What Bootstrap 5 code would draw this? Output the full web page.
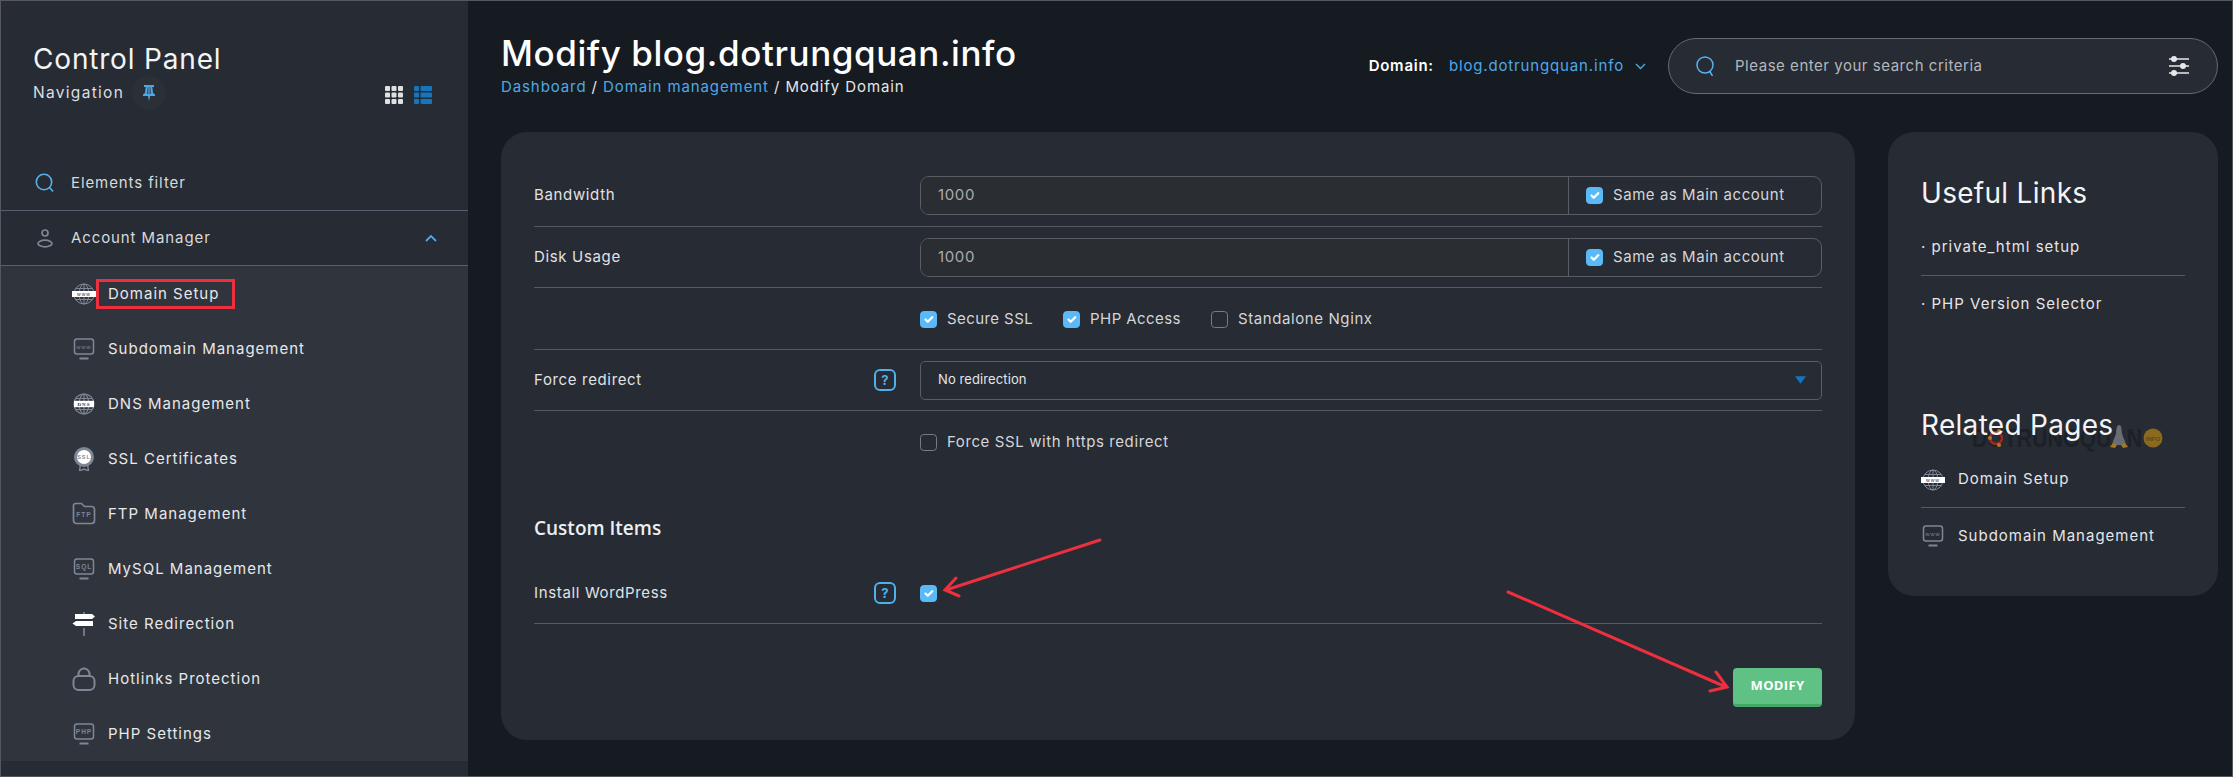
<!doctype html>
<html lang="en"><head><meta charset="utf-8"><title>Modify Domain</title>
<link href="https://cdn.jsdelivr.net/npm/bootstrap@5.3.0/dist/css/bootstrap.min.css" rel="stylesheet">
<style>
html,body{height:777px;overflow:hidden;margin:0}
body{background:#161a21;font-family:Inter,"Liberation Sans",sans-serif;color:#e4e6e9;position:relative}
.shell{width:2233px;height:777px;border:1px solid #55585e}
.sidebar{width:467px;height:100%;background:#272b33;flex:none}
.side-head{height:155px;padding:35px 0 0 32px;position:relative}
.cp-title{font-size:28px;line-height:46px;letter-spacing:.82px;color:#f3f4f5}
.cp-nav{font-size:15.5px;line-height:24px;letter-spacing:1.3px;color:#dcdee1;margin-top:-6px}
.pin-glow{width:34px;height:34px;border-radius:50%;background:#2b2f37;margin-left:8px}
.view-toggle{position:absolute;left:384px;top:85px;gap:11px}
.side-row{height:55px;border-bottom:1px solid #56606e;font-size:15px;letter-spacing:.9px;color:#d7d9dc;padding-left:34px}
.side-row svg.ico{margin-right:16px}
.chev{margin-right:31px}
.sub-menu{background:#30343c}
.sub-item{height:55px;padding-left:71px;font-size:15px;letter-spacing:1px;color:#e7e8ea}
.sub-item span{position:relative;top:1px}
.sub-item svg{margin-right:12px;width:24px;height:24px;flex:none}
.marked{border:3px solid #ee2f3e;margin-left:-12px;padding:2px 13px 2px 9px;margin-top:-2px;line-height:20px}
.content{padding:30px 14px 0 33px;flex:1;min-width:0}
.page-head{height:101px}
.page-title{font-size:35px;line-height:44px;font-weight:500;letter-spacing:.57px;color:#fff;margin:0}
.crumbs{font-size:15px;line-height:20px;letter-spacing:.9px;color:#e4e6e9;margin-top:2px}
.crumbs a,.domain-val{color:#4fa8e6;text-decoration:none}
.top-tools{margin-top:7px}
.domain-lbl{font-size:15px;font-weight:600;color:#fff;letter-spacing:.75px;margin-right:15px}
.domain-val{font-size:15px;letter-spacing:.85px;margin-right:11px}
.searchbar{width:550px;height:56px;border:1.5px solid #676a70;border-radius:28px;background:#272b33;margin-left:22px;padding:0 27px;font-size:15px;letter-spacing:.53px;color:#b4b7bc}
.panel-main{width:1354px;height:608px;background:#272b33;border-radius:26px;padding:44px 33px 0;flex:none}
.panel-side{width:330px;height:464px;background:#272b33;border-radius:26px;padding:44px 33px 0;margin-left:33px;flex:none;position:relative}
.form-line{border-bottom:1px solid #565960;font-size:15px;letter-spacing:.65px;color:#e0e2e5}
.row-first{padding-bottom:11px}
.row-second{padding:11px 0 10px}
.row-check{height:62px;padding-top:1px}
.row-plain{height:61px}
.row-free{height:63px;border-bottom:0}
.offset-cell{width:386px;flex:none}
.lbl-cell{width:340px;flex:none}
.help-cell{width:46px;flex:none}
.help-btn{width:22px;height:22px;border:2px solid #4fb0ee;border-radius:6px;color:#4fb0ee;font-size:13px;font-weight:700;line-height:18px;text-align:center;letter-spacing:0}
.combo{flex:1;height:39px;border:1px solid #5a5d64;border-radius:9px;overflow:hidden}
.combo-num{flex:1;background:#2a2d32;padding-left:17px;color:#a9acb1;border-right:1px solid #5a5d64}
.combo-chk{width:252px;padding-left:17px;color:#d4d6da;letter-spacing:.55px}
.tick{width:17px;height:17px;flex:none;margin:0 10px 0 0;background-color:transparent;border:1px solid #777b84;border-radius:4px}
.tick:checked{background-color:#5ab9f7;border-color:#5ab9f7}
.tick-lbl{color:#d4d6da;letter-spacing:.42px;margin-right:30px}
.tick-wide{color:#d4d6da;letter-spacing:.6px}
.sel{flex:1;height:39px;border:1px solid #5a5d64;border-radius:5px;background-color:transparent;color:#e4e6e9;font-size:13px;padding-left:17px;background-image:url("data:image/svg+xml,%3csvg xmlns='http://www.w3.org/2000/svg' viewBox='0 0 12 8'%3e%3cpath fill='%231576bd' d='M0 0h12L6 8z'/%3e%3c/svg%3e");background-size:11px 8px;background-position:right 15px center;letter-spacing:.1px}
.sec-title{font-family:"Open Sans",sans-serif;font-weight:600;font-size:19px;line-height:26px;color:#eceef0;padding-top:41px;height:89px}
.modify-btn{background:#5fc183;border:0;border-bottom:3px solid #46a866;border-radius:4px;width:89px;height:39px;color:#fff;font-family:"Open Sans",sans-serif;font-weight:700;font-size:13px;letter-spacing:.35px;padding:0;margin-top:44px}
.side-title{font-size:28px;line-height:34px;letter-spacing:.3px;color:#f3f4f5;position:relative;z-index:2}
.second-title{margin-top:76px}
.link-list{margin-top:10px}
.link-item{height:56px;font-size:15px;letter-spacing:1px;color:#e4e6e9;border-bottom:1px solid #565960;position:relative;z-index:2}
.link-item svg{width:24px;height:24px;margin-right:13px;flex:none}
.wm{position:absolute;left:84px;top:290px;width:200px;height:36px}
.notes{position:absolute;left:0;top:0;pointer-events:none;z-index:5}
</style></head>
<body>
<svg width="0" height="0" class="d-block position-absolute">
<defs>
<symbol id="i-globe" viewBox="0 0 24 24"><g fill="none" stroke="#7f8696" stroke-width="1"><circle cx="12" cy="12" r="10"/><ellipse cx="12" cy="12" rx="4.8" ry="10"/><path d="M12 2v20M3.5 6.5h17M3.5 17.5h17"/></g><rect x="0" y="9" width="24" height="6" fill="#fff"/><text x="12" y="14" font-size="5" text-anchor="middle" fill="#30343c" font-family="Liberation Sans">www</text></symbol>
<symbol id="i-dns" viewBox="0 0 24 24"><g fill="none" stroke="#7f8696" stroke-width="1.2"><circle cx="12" cy="12" r="10"/><ellipse cx="12" cy="12" rx="4.8" ry="10"/><path d="M12 2v20M3.5 6.5h17M3.5 17.5h17"/></g><rect x="2" y="8.8" width="20" height="6.4" fill="#fff"/><text x="12" y="14" font-size="5" font-weight="700" text-anchor="middle" fill="#30343c" font-family="Liberation Serif">DNS</text></symbol>
<symbol id="i-www" viewBox="0 0 24 24"><rect x="2.5" y="2" width="19" height="15" rx="2.5" fill="none" stroke="#7f8696" stroke-width="1.5"/><path d="M7.500 21.500h9" stroke="#7f8696" stroke-width="2"/><text x="12" y="11.500" font-size="5.500" text-anchor="middle" fill="#7f8696" font-family="Liberation Sans">www</text></symbol>
<symbol id="i-sql" viewBox="0 0 24 24"><rect x="2.5" y="2" width="19" height="15" rx="2.500" fill="none" stroke="#7f8696" stroke-width="1.500"/><path d="M7.500 21.500h9" stroke="#7f8696" stroke-width="2"/><text x="12" y="12" font-size="6.500" font-weight="700" text-anchor="middle" fill="#7f8696" font-family="Liberation Sans">SQL</text></symbol>
<symbol id="i-php" viewBox="0 0 24 24"><rect x="2.5" y="2" width="19" height="15" rx="2.500" fill="none" stroke="#7f8696" stroke-width="1.500"/><path d="M7.500 21.500h9" stroke="#7f8696" stroke-width="2"/><text x="12" y="12" font-size="6.500" font-weight="700" text-anchor="middle" fill="#7f8696" font-family="Liberation Sans">PHP</text></symbol>
<symbol id="i-ssl" viewBox="0 0 24 24"><path d="M8.500 17l-1 7 4.500-2 4.500 2-1-7" fill="none" stroke="#7f8696" stroke-width="1.400"/><circle cx="12" cy="10" r="10" fill="#7f8696"/><circle cx="12" cy="10" r="7" fill="#fff"/><text x="12" y="12" font-size="5.500" font-weight="700" text-anchor="middle" fill="#7f8696" font-family="Liberation Sans">SSL</text></symbol>
<symbol id="i-ftp" viewBox="0 0 24 24"><path d="M3.500 1.500h6l3 3h7a3 3 0 0 1 3 3v11a3 3 0 0 1-3 3h-15a3 3 0 0 1-3-3V3.500a2 2 0 0 1 2-2z" fill="none" stroke="#7f8696" stroke-width="1.700"/><text x="12" y="15" font-size="6.500" font-weight="700" text-anchor="middle" fill="#7f8696" font-family="Liberation Sans">FTP</text></symbol>
<symbol id="i-sign" viewBox="0 0 24 24"><path d="M12 0v4M12 16v8" stroke="#7f8696" stroke-width="1.600"/><path d="M3 2h17l3 2.500L20 7H3z" fill="#fff"/><path d="M21 9H4l-3.500 2.500L4 14h17z" fill="#fff"/></symbol>
<symbol id="i-lock" viewBox="0 0 24 24"><rect x="1.500" y="9" width="21" height="14" rx="5" fill="none" stroke="#7f8696" stroke-width="2"/><path d="M6.500 9V7a5.500 5.500 0 0 1 11 0v2" fill="none" stroke="#7f8696" stroke-width="2"/></symbol>
</defs></svg>

<div class="shell d-flex">
 <aside class="sidebar d-flex flex-column">
  <div class="side-head">
   <div class="cp-title">Control Panel</div>
   <div class="cp-nav d-flex align-items-center"><span>Navigation</span>
    <span class="pin-glow d-flex align-items-center justify-content-center">
     <svg width="12" height="16" viewBox="0 0 12 16"><path d="M1 0h10v2H9.300l.7 6 2 1.500V11H7l-1 5-1-5H0V9.500L2 8l.7-6H1zM4.700 2l-.5 7h1.100V2zM6.700 2v7h1.100l-.5-7z" fill="#4fa8e6" fill-rule="evenodd"/></svg>
    </span>
   </div>
   <div class="view-toggle d-flex">
    <svg width="18" height="18" viewBox="0 0 18 18"><g fill="#dfe0e2"><rect width="5" height="5" rx="1"/><rect x="6.500" width="5" height="5" rx="1"/><rect x="13" width="5" height="5" rx="1"/><rect y="6.500" width="5" height="5" rx="1"/><rect x="6.500" y="6.500" width="5" height="5" rx="1"/><rect x="13" y="6.500" width="5" height="5" rx="1"/><rect y="13" width="5" height="5" rx="1"/><rect x="6.500" y="13" width="5" height="5" rx="1"/><rect x="13" y="13" width="5" height="5" rx="1"/></g></svg>
    <svg width="18" height="18" viewBox="0 0 18 18"><g fill="#1576bd"><rect width="5" height="5" rx="1"/><rect x="6.500" width="11.500" height="5" rx="1"/><rect y="6.500" width="5" height="5" rx="1"/><rect x="6.500" y="6.500" width="11.500" height="5" rx="1"/><rect y="13" width="5" height="5" rx="1"/><rect x="6.500" y="13" width="11.500" height="5" rx="1"/></g></svg>
   </div>
  </div>
  <div class="side-row d-flex align-items-center">
   <svg class="ico" width="20" height="20" viewBox="0 0 20 20" fill="none" stroke="#57b2f0" stroke-width="1.600"><circle cx="9" cy="9" r="7.700"/><path d="M14.500 14.500l3.500 4"/></svg>
   <span>Elements filter</span></div>
  <div class="side-row d-flex align-items-center">
   <svg class="ico" width="20" height="20" viewBox="0 0 20 20" fill="none" stroke="#7f8696" stroke-width="1.700"><circle cx="10" cy="5" r="3"/><ellipse cx="10" cy="15.500" rx="7" ry="3.300"/></svg>
   <span class="flex-grow-1">Account Manager</span>
   <svg class="chev" width="12" height="8" viewBox="0 0 12 8" fill="none" stroke="#4fa8e6" stroke-width="1.800"><path d="M1 7l5-5 5 5"/></svg></div>
  <div class="sub-menu">
   <div class="sub-item d-flex align-items-center"><svg><use href="#i-globe"/></svg><span class="marked">Domain Setup</span></div>
   <div class="sub-item d-flex align-items-center"><svg><use href="#i-www"/></svg><span>Subdomain Management</span></div>
   <div class="sub-item d-flex align-items-center"><svg><use href="#i-dns"/></svg><span>DNS Management</span></div>
   <div class="sub-item d-flex align-items-center"><svg><use href="#i-ssl"/></svg><span>SSL Certificates</span></div>
   <div class="sub-item d-flex align-items-center"><svg><use href="#i-ftp"/></svg><span>FTP Management</span></div>
   <div class="sub-item d-flex align-items-center"><svg><use href="#i-sql"/></svg><span>MySQL Management</span></div>
   <div class="sub-item d-flex align-items-center"><svg><use href="#i-sign"/></svg><span>Site Redirection</span></div>
   <div class="sub-item d-flex align-items-center"><svg><use href="#i-lock"/></svg><span>Hotlinks Protection</span></div>
   <div class="sub-item d-flex align-items-center"><svg><use href="#i-php"/></svg><span>PHP Settings</span></div>
  </div>
 </aside>

 <main class="content">
  <header class="page-head d-flex justify-content-between align-items-start">
   <div>
    <h1 class="page-title">Modify blog.dotrungquan.info</h1>
    <div class="crumbs"><a href="#">Dashboard</a> / <a href="#">Domain management</a> / Modify Domain</div>
   </div>
   <div class="top-tools d-flex align-items-center">
    <span class="domain-lbl">Domain:</span><span class="domain-val">blog.dotrungquan.info</span>
    <svg width="11" height="7" viewBox="0 0 11 7" fill="none" stroke="#4fa8e6" stroke-width="1.400"><path d="M1 1l4.500 4.500L10 1"/></svg>
    <div class="searchbar d-flex align-items-center">
     <svg width="19" height="20" viewBox="0 0 19 20" fill="none" stroke="#57b2f0" stroke-width="1.500" class="me-3"><circle cx="9" cy="9" r="8"/><path d="M13.500 15l3 5"/></svg>
     <span class="flex-grow-1 ms-1">Please enter your search criteria</span>
     <svg width="22" height="22" viewBox="0 0 22 22"><g stroke="#e6e7e9" stroke-width="1.500"><path d="M1 4h20M1 11h20M1 18h20"/></g><g fill="#e6e7e9"><circle cx="6" cy="4" r="3"/><circle cx="15" cy="11" r="3"/><circle cx="6" cy="18" r="3"/></g></svg>
    </div>
   </div>
  </header>

  <div class="d-flex align-items-start">
   <section class="panel-main">
    <div class="form-line row-first d-flex align-items-center">
     <div class="offset-cell">Bandwidth</div>
     <div class="combo d-flex align-items-stretch"><div class="combo-num d-flex align-items-center">1000</div><div class="combo-chk d-flex align-items-center"><input type="checkbox" class="form-check-input tick" checked><span>Same as Main account</span></div></div>
    </div>
    <div class="form-line row-second d-flex align-items-center">
     <div class="offset-cell">Disk Usage</div>
     <div class="combo d-flex align-items-stretch"><div class="combo-num d-flex align-items-center">1000</div><div class="combo-chk d-flex align-items-center"><input type="checkbox" class="form-check-input tick" checked><span>Same as Main account</span></div></div>
    </div>
    <div class="form-line row-check d-flex align-items-center">
     <div class="offset-cell"></div>
     <input type="checkbox" class="form-check-input tick" checked><span class="tick-lbl">Secure SSL</span>
     <input type="checkbox" class="form-check-input tick" checked><span class="tick-lbl">PHP Access</span>
     <input type="checkbox" class="form-check-input tick"><span class="tick-wide">Standalone Nginx</span>
    </div>
    <div class="form-line row-plain d-flex align-items-center">
     <div class="lbl-cell">Force redirect</div><div class="help-cell"><div class="help-btn">?</div></div>
     <select class="form-select sel"><option>No redirection</option></select>
    </div>
    <div class="form-line row-free d-flex align-items-center">
     <div class="offset-cell"></div>
     <input type="checkbox" class="form-check-input tick"><span class="tick-wide">Force SSL with https redirect</span>
    </div>
    <div class="sec-title">Custom Items</div>
    <div class="form-line row-plain d-flex align-items-center">
     <div class="lbl-cell">Install WordPress</div><div class="help-cell"><div class="help-btn">?</div></div>
     <input type="checkbox" class="form-check-input tick" checked>
    </div>
    <div class="d-flex justify-content-end"><button class="btn modify-btn">MODIFY</button></div>
   </section>

   <aside class="panel-side">
    <div class="side-title">Useful Links</div>
    <div class="link-list">
     <div class="link-item d-flex align-items-center"><span>· private_html setup</span></div>
     <div class="link-item d-flex align-items-center border-0"><span>· PHP Version Selector</span></div>
    </div>
    <div class="side-title second-title">Related Pages</div>
    <div class="link-list">
     <div class="link-item d-flex align-items-center"><svg><use href="#i-globe"/></svg><span>Domain Setup</span></div>
     <div class="link-item d-flex align-items-center border-0"><svg><use href="#i-www"/></svg><span>Subdomain Management</span></div>
    </div>
    <svg class="wm" viewBox="0 0 200 36">
     <text x="0" y="25" font-family="Liberation Sans" font-weight="700" font-size="26" fill="#1c2028" textLength="170" lengthAdjust="spacingAndGlyphs">DOTRUNGQUAN</text>
     <circle cx="24" cy="16" r="6" fill="none" stroke="#9c2a20" stroke-width="2.500"/><circle cx="18" cy="16" r="2" fill="#b5761f"/><circle cx="27" cy="9" r="2" fill="#b5761f"/><circle cx="27" cy="23" r="2" fill="#b5761f"/>
     <path d="M147 3c2.500 0 2.500 4 3 8s3.500 7 3.500 12h-13c0-5 3-8 3.500-12s.500-8 3-8z" fill="#6a6d74"/><path d="M141 21l-3 4 5 1 2-3zM153 21l3 4-5 1-2-3z" fill="#a6791f"/>
     <circle cx="181" cy="16" r="9.500" fill="#8a6a1f"/><text x="181" y="18.500" font-size="6" font-weight="700" text-anchor="middle" fill="#5d4a1a" font-family="Liberation Sans">INFO</text>
    </svg>
   </aside>
  </div>
 </main>
</div>

<svg class="notes" width="2233" height="777" viewBox="0 0 2233 777" fill="none" stroke="#ee2f3e" stroke-width="3" stroke-linecap="round">
 <path d="M1100 540L946 590M956 578l-11 12 14 6"/>
 <path d="M1508 592L1726 687M1716 672l11 15-17 4"/>
</svg>
<script src="https://cdn.jsdelivr.net/npm/bootstrap@5.3.0/dist/js/bootstrap.bundle.min.js"></script>
</body></html>
